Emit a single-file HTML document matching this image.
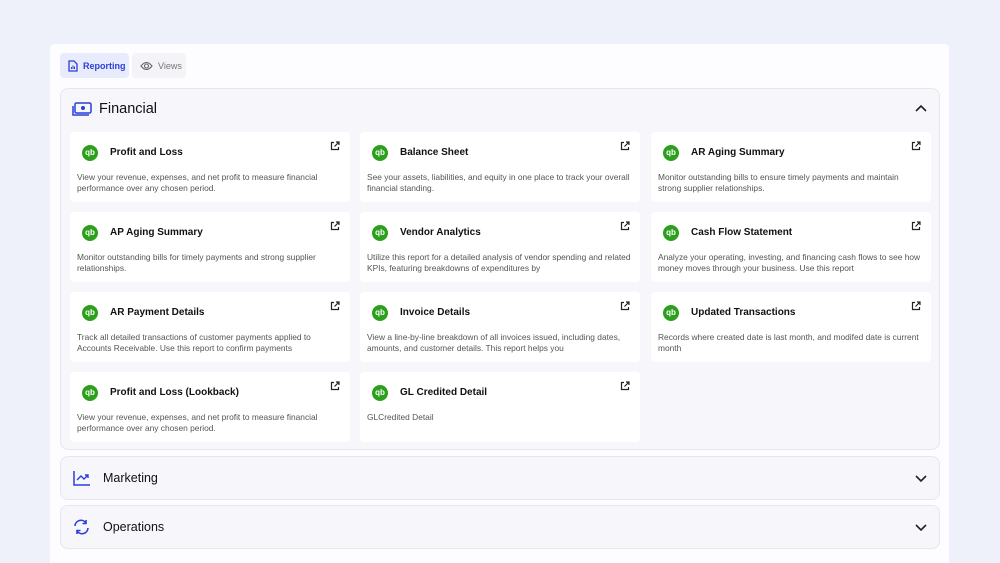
<!DOCTYPE html>
<html><head><style>
*{box-sizing:border-box;margin:0;padding:0}
html,body{width:1000px;height:563px;overflow:hidden}
body{background:#eef1fa;font-family:"Liberation Sans",sans-serif;position:relative;color:#111}
.panel{position:absolute;left:50px;top:44px;width:899px;height:519px;background:#fdfdff;border-radius:4px 4px 0 0}
.tab{position:absolute;top:53px;height:25px;border-radius:4px;font-size:9px;display:flex;align-items:center;gap:5px;padding-left:8px}
.sec{position:absolute;left:60px;width:880px;background:#f7f7fb;border:1px solid #e6e6ee;border-radius:8px}
.card{position:absolute;width:280px;height:70px;background:#fff;border-radius:4px}
.qb{position:absolute;left:12px;top:13px;width:16px;height:16px;border-radius:50%;background:#2ca01c;color:#fff;font-size:8px;font-weight:bold;text-align:center;line-height:16px}
.card h4{position:absolute;left:40px;top:15px;font-size:10px;font-weight:bold}
.card p{position:absolute;left:7px;top:40px;right:8px;font-size:8.4px;line-height:11px;color:#555;height:22px;overflow:hidden}
.ext{position:absolute;right:10px;top:9px}
.sh{position:absolute;left:42px;font-size:12.5px}
.chev{position:absolute;right:12px}
</style></head><body>
<div class="panel"></div>
<div class="tab" style="left:60px;width:69px;background:#e8ebfb;color:#2a3fd6;font-weight:bold">
<svg width="10" height="12" viewBox="0 0 10 12"><path d="M1 1h5l3 3v7H1z" fill="none" stroke="#2a3fd6" stroke-width="1.3"/><path d="M3.5 9V7M5 9V5.5M6.5 9V6.5" stroke="#2a3fd6" stroke-width="1"/></svg>Reporting</div>
<div class="tab" style="left:132px;width:54px;background:#f4f4f8;color:#777">
<svg width="13" height="10" viewBox="0 0 13 10"><path d="M1 5Q6.5-2 12 5Q6.5 12 1 5z" fill="none" stroke="#666" stroke-width="1.1"/><circle cx="6.5" cy="5" r="2" fill="none" stroke="#666" stroke-width="1.1"/></svg>Views</div>

<div class="sec" style="top:88px;height:362px">
<svg style="position:absolute;left:11px;top:13px" width="20" height="15" viewBox="0 0 20 15"><rect x="3" y="1" width="16" height="10" rx="1.5" fill="none" stroke="#2a3fd6" stroke-width="1.5"/><circle cx="11" cy="6" r="2" fill="#2a3fd6"/><path d="M1 4v9h16" fill="none" stroke="#2a3fd6" stroke-width="1.5"/></svg>
<div class="sh" style="left:38px;top:12px;font-size:14.5px">Financial</div>
<svg class="chev" style="top:15px" width="12" height="8" viewBox="0 0 12 8"><path d="M1 7l5-5 5 5" fill="none" stroke="#222" stroke-width="1.6"/></svg>
</div>

<div id="cards"></div>
<script>
var d=[["Profit and Loss","View your revenue, expenses, and net profit to measure financial performance over any chosen period."],
["Balance Sheet","See your assets, liabilities, and equity in one place to track your overall financial standing."],
["AR Aging Summary","Monitor outstanding bills to ensure timely payments and maintain strong supplier relationships."],
["AP Aging Summary","Monitor outstanding bills for timely payments and strong supplier relationships."],
["Vendor Analytics","Utilize this report for a detailed analysis of vendor spending and related KPIs, featuring breakdowns of expenditures by"],
["Cash Flow Statement","Analyze your operating, investing, and financing cash flows to see how money moves through your business. Use this report"],
["AR Payment Details","Track all detailed transactions of customer payments applied to Accounts Receivable. Use this report to confirm payments"],
["Invoice Details","View a line-by-line breakdown of all invoices issued, including dates, amounts, and customer details. This report helps you"],
["Updated Transactions","Records where created date is last month, and modifed date is current month"],
["Profit and Loss (Lookback)","View your revenue, expenses, and net profit to measure financial performance over any chosen period."],
["GL Credited Detail","GLCredited Detail"]];
var xs=[70,360,651],h="";
d.forEach(function(c,i){var x=xs[i%3],y=132+Math.floor(i/3)*80;
h+='<div class="card" style="left:'+x+'px;top:'+y+'px"><div class="qb">qb</div><h4>'+c[0]+'</h4><svg class="ext" width="10" height="10" viewBox="0 0 10 10"><path d="M4 1.5H1.5v7h7V6M6 1h3v3M9 1L4.5 5.5" fill="none" stroke="#222" stroke-width="1.2"/></svg><p>'+c[1]+'</p></div>';});
document.getElementById("cards").innerHTML=h;
</script>

<div class="sec" style="top:456px;height:44px">
<svg style="position:absolute;left:12px;top:13px" width="18" height="16" viewBox="0 0 18 16"><path d="M1 1v14h16" fill="none" stroke="#2a3fd6" stroke-width="1.5"/><path d="M4 10l4-4 3 3 4-4M12 5h3v3" fill="none" stroke="#2a3fd6" stroke-width="1.4"/></svg>
<div class="sh" style="top:14px">Marketing</div>
<svg class="chev" style="top:18px" width="12" height="8" viewBox="0 0 12 8"><path d="M1 1l5 5 5-5" fill="none" stroke="#222" stroke-width="1.6"/></svg>
</div>
<div class="sec" style="top:505px;height:44px">
<svg style="position:absolute;left:12px;top:13px" width="17" height="16" viewBox="0 0 17 16"><path d="M2 7a6 6 0 0 1 11-3M15 9a6 6 0 0 1-11 3" fill="none" stroke="#2a3fd6" stroke-width="1.6"/><path d="M13 1v3.5H9.5M4 15v-3.5h3.5" fill="none" stroke="#2a3fd6" stroke-width="1.6"/></svg>
<div class="sh" style="top:14px">Operations</div>
<svg class="chev" style="top:18px" width="12" height="8" viewBox="0 0 12 8"><path d="M1 1l5 5 5-5" fill="none" stroke="#222" stroke-width="1.6"/></svg>
</div>
</body></html>
